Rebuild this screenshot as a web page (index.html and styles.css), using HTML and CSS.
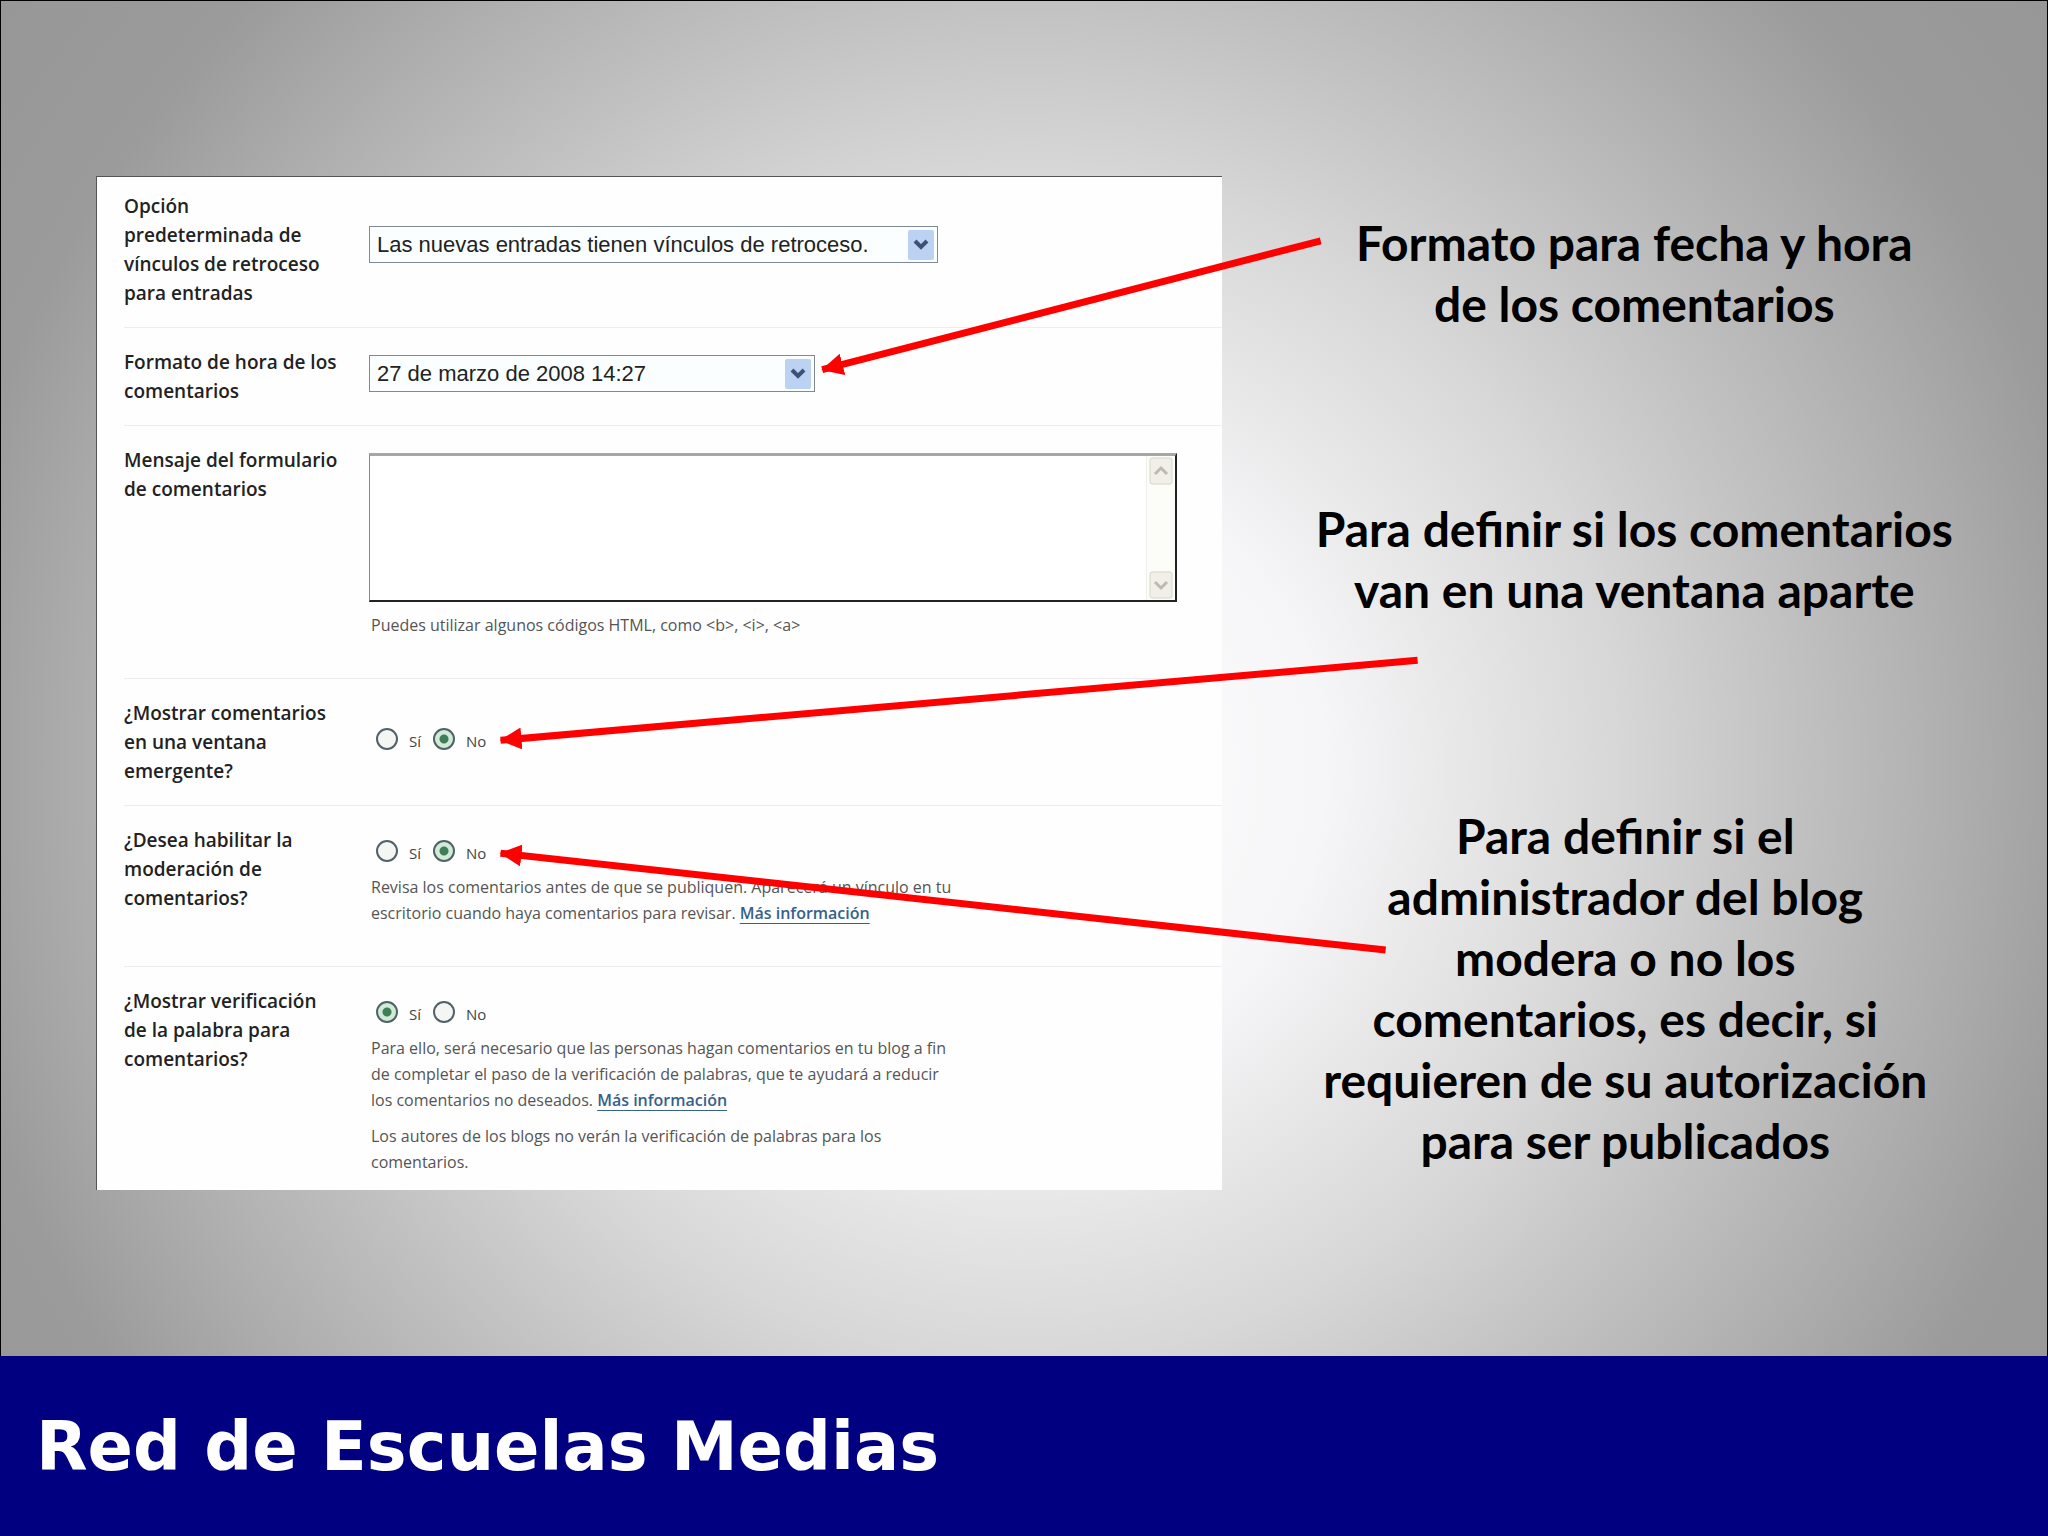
FILE: index.html
```html
<!DOCTYPE html>
<html lang="es">
<head>
    <meta charset="UTF-8">
    <meta name="viewport" content="width=device-width, initial-scale=1.0">
    <title>Red de Escuelas Medias</title>
    <link rel="stylesheet" href="styles.css">
</head>
<body>
    <main class="slide">
        <form class="panel">
            <div class="row row-first">
                <label class="row-label" for="backlinks">Opción<br>predeterminada de<br>vínculos de retroceso<br>para entradas</label>
                <div class="field field-low">
                    <div class="select-box select-wide">
                        <select id="backlinks">
                            <option>Las nuevas entradas tienen vínculos de retroceso.</option>
                            <option>Las nuevas entradas no tienen vínculos de retroceso.</option>
                        </select>
                        <svg class="drop" viewBox="0 0 26 30"><rect width="26" height="30" rx="2"/><path d="M7 11l6 6 6-6"/></svg>
                    </div>
                </div>
            </div>
            <div class="row">
                <label class="row-label" for="timeFormat">Formato de hora de los<br>comentarios</label>
                <div class="field">
                    <div class="select-box">
                        <select id="timeFormat">
                            <option>27 de marzo de 2008 14:27</option>
                        </select>
                        <svg class="drop" viewBox="0 0 26 30"><rect width="26" height="30" rx="2"/><path d="M7 11l6 6 6-6"/></svg>
                    </div>
                </div>
            </div>
            <div class="row row-tall">
                <label class="row-label" for="message">Mensaje del formulario<br>de comentarios</label>
                <div class="field">
                    <div class="message-box">
                        <textarea id="message"></textarea>
                        <div class="scroll">
                            <svg viewBox="0 0 24 28"><rect x="1" y="1" width="22" height="26" rx="2"/><path d="M6 17l6-6 6 6"/></svg>
                            <svg viewBox="0 0 24 28"><rect x="1" y="1" width="22" height="26" rx="2"/><path d="M6 11l6 6 6-6"/></svg>
                        </div>
                    </div>
                    <p class="hint">Puedes utilizar algunos códigos HTML, como &lt;b&gt;, &lt;i&gt;, &lt;a&gt;</p>
                </div>
            </div>
            <div class="row">
                <span class="row-label" id="popupLabel">¿Mostrar comentarios<br>en una ventana<br>emergente?</span>
                <div class="field field-middle">
                    <div class="radios" role="radiogroup" aria-labelledby="popupLabel">
                        <label><input type="radio" name="popup"><span>Sí</span></label>
                        <label><input type="radio" name="popup" checked><span>No</span></label>
                    </div>
                </div>
            </div>
            <div class="row row-tall">
                <span class="row-label" id="moderationLabel">¿Desea habilitar la<br>moderación de<br>comentarios?</span>
                <div class="field">
                    <div class="radios" role="radiogroup" aria-labelledby="moderationLabel">
                        <label><input type="radio" name="moderation"><span>Sí</span></label>
                        <label><input type="radio" name="moderation" checked><span>No</span></label>
                    </div>
                    <p class="hint">Revisa los comentarios antes de que se publiquen. Aparecerá un vínculo en tu<br>escritorio cuando haya comentarios para revisar. <a href="#">Más información</a></p>
                </div>
            </div>
            <div class="row">
                <span class="row-label" id="captchaLabel">¿Mostrar verificación<br>de la palabra para<br>comentarios?</span>
                <div class="field">
                    <div class="radios" role="radiogroup" aria-labelledby="captchaLabel">
                        <label><input type="radio" name="captcha" checked><span>Sí</span></label>
                        <label><input type="radio" name="captcha"><span>No</span></label>
                    </div>
                    <p class="hint">Para ello, será necesario que las personas hagan comentarios en tu blog a fin<br>de completar el paso de la verificación de palabras, que te ayudará a reducir<br>los comentarios no deseados. <a href="#">Más información</a></p>
                    <p class="hint">Los autores de los blogs no verán la verificación de palabras para los<br>comentarios.</p>
                </div>
            </div>
        </form>
        <div class="notes">
            <p>Formato para fecha y hora<br>de los comentarios</p>
            <p>Para definir si los comentarios<br>van en una ventana aparte</p>
            <p class="note-long">Para definir si el<br>administrador del blog<br>modera o no los<br>comentarios, es decir, si<br>requieren de su autorización<br>para ser publicados</p>
        </div>
        <!-- arrows from each note to its setting -->
        <svg class="arrows" viewBox="0 0 2048 1356" preserveAspectRatio="xMinYMin meet">
            <defs>
                <marker id="head" markerUnits="userSpaceOnUse" markerWidth="22" markerHeight="22" refX="21" refY="11" orient="auto">
                    <path d="M0 0l22 11L0 22z"/>
                </marker>
            </defs>
            <path d="M1321 240L822 369"/>
            <path d="M1418 660L500 740"/>
            <path d="M1386 950L500 853"/>
        </svg>
    </main>
    <footer class="footer">
        <h1>Red de Escuelas Medias</h1>
    </footer>
</body>
</html>
```
FILE: styles.css
```css
* {
    box-sizing: border-box;
}
body {
    margin: 0;
    min-height: 100vh;
    display: flex;
    flex-direction: column;
    background: radial-gradient(circle at 50% 50%, #ffffff 0, #f6f5f7 300px, #e9e8e9 430px, #d8d7d8 595px, #c3c2c3 765px, #adacad 950px, #9c9b9c 1090px, #979797 1280px);
    font-family: "Open Sans", "Noto Sans", sans-serif;
}
.slide {
    position: relative;
    flex: 1;
    display: grid;
    grid-template-columns: 15fr 11fr;
    align-items: start;
    padding: 175px 0 0 95px;
    border: 1px solid #000000;
    border-bottom: none;
}
.panel {
    padding-left: 27px;
    background-color: #fefefe;
    border-top: 1px solid #555555;
    border-left: 1px solid #555555;
}
.row {
    display: grid;
    grid-template-columns: 245px 1fr;
    padding-bottom: 19px;
    border-bottom: 1px solid #eeecf0;
}
.row:last-child {
    border-bottom: none;
    padding-bottom: 5px;
}
.row-tall {
    padding-bottom: 30px;
}
.row-label {
    padding-top: 20px;
    font-size: 19px;
    font-weight: 600;
    line-height: 29px;
    color: #222222;
}
.row-first .row-label {
    padding-top: 15px;
}
.field {
    padding-top: 27px;
}
.field-low {
    padding-top: 49px;
}
.field-middle {
    padding-top: 42px;
}
.select-box {
    position: relative;
    width: 446px;
}
.select-wide {
    width: 569px;
}
select {
    appearance: none;
    display: block;
    width: 100%;
    height: 37px;
    padding: 0 34px 0 7px;
    border: 1px solid #7f8a94;
    border-radius: 0;
    background-color: #fbfefe;
    font-family: "Liberation Sans", Arial, sans-serif;
    font-size: 22px;
    color: #222222;
}
.drop {
    position: absolute;
    top: 4px;
    right: 4px;
    width: 26px;
    height: 30px;
    fill: #bcd2f2;
    pointer-events: none;
}
.drop path {
    fill: none;
    stroke: #3c5078;
    stroke-width: 4;
}
.message-box {
    position: relative;
    width: 808px;
}
textarea {
    display: block;
    width: 100%;
    height: 149px;
    padding: 8px 36px 8px 8px;
    border: 1px solid #888888;
    border-top: 3px solid #a8a6a6;
    border-right: 2px solid #222222;
    border-bottom: 2px solid #222222;
    background-color: #ffffff;
    resize: none;
}
.scroll {
    position: absolute;
    top: 3px;
    right: 2px;
    bottom: 2px;
    display: flex;
    flex-direction: column;
    justify-content: space-between;
    padding: 1px 2px;
    border-left: 1px solid #eeeeea;
    background-color: #fcfcf8;
}
.scroll svg {
    width: 24px;
    height: 28px;
    fill: #f0efe8;
    stroke: #d8d6ca;
}
.scroll path {
    fill: none;
    stroke: #bdbbb0;
    stroke-width: 3;
}
.radios {
    display: flex;
    gap: 12px;
    height: 35px;
    padding-left: 7px;
}
.radios label {
    display: flex;
    align-items: center;
    gap: 11px;
    font-size: 15px;
    color: #444444;
}
.radios span {
    padding-top: 5px;
}
input[type="radio"] {
    appearance: none;
    width: 22px;
    height: 22px;
    margin: 0;
    border: 2px solid #4f6268;
    border-radius: 50%;
    background-color: #f4f6f4;
}
input[type="radio"]:checked {
    background: radial-gradient(circle, #3f7f58 0, #3f7f58 4px, #d2ead8 5px);
}
.hint {
    margin: 0 0 10px;
    padding: 6px 0 0 2px;
    font-size: 16px;
    line-height: 26px;
    color: #555555;
}
.message-box + .hint {
    padding-top: 10px;
}
.hint + .hint {
    padding-top: 0;
}
.hint a {
    color: #36618c;
    font-weight: 600;
    text-underline-offset: 4px;
}
.notes {
    padding-top: 36px;
    font-family: Lato, sans-serif;
    font-size: 48px;
    font-weight: bold;
    line-height: 61px;
    text-align: center;
    color: #000000;
}
.notes p {
    margin: 0 0 164px;
}
.notes .note-long {
    margin: 185px 18px 0 0;
}
.arrows {
    position: absolute;
    top: 0;
    left: 0;
    width: 100%;
    height: 100%;
    fill: none;
    stroke: #ff0000;
    stroke-width: 7;
    pointer-events: none;
}
.arrows > path {
    marker-end: url(#head);
}
.arrows marker path {
    fill: #ff0000;
    stroke: none;
}
.footer {
    padding: 51px 36px 48px;
    background-color: #000080;
    color: #ffffff;
}
.footer h1 {
    margin: 0;
    font-family: "DejaVu Sans", Verdana, sans-serif;
    font-size: 67px;
    line-height: 81px;
}
```
